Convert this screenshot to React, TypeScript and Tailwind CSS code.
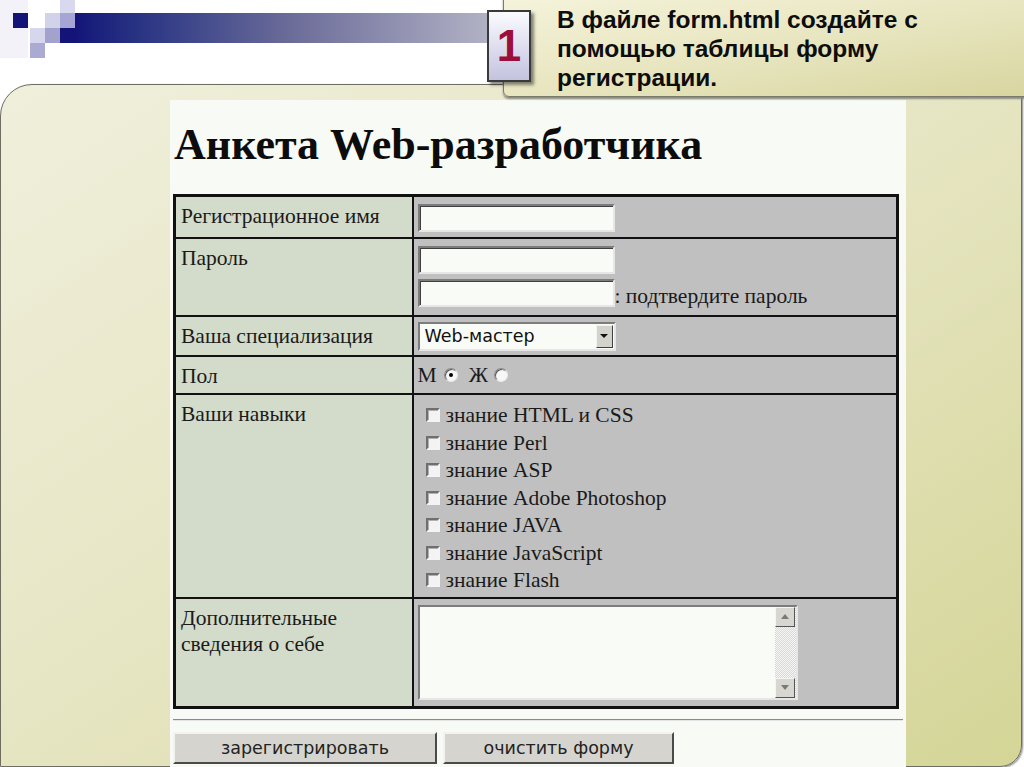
import React from "react";

const serif = "font-['Liberation_Serif','Times_New_Roman',serif]";
const sans = "font-['DejaVu_Sans','Verdana',sans-serif]";

const skills = [
  "знание HTML и CSS",
  "знание Perl",
  "знание ASP",
  "знание Adobe Photoshop",
  "знание JAVA",
  "знание JavaScript",
  "знание Flash",
];

const TextBox = ({ className = "" }: { className?: string }) => (
  <div
    className={
      "h-[28px] w-[197px] border-2 border-t-[#7c7c7c] border-l-[#7c7c7c] border-b-[#e6e6e6] border-r-[#e6e6e6] bg-[#f8fbf6] shadow-[inset_1px_1px_0_#3f3f3f] " +
      className
    }
  />
);

const Radio = ({ checked }: { checked?: boolean }) => (
  <span className="inline-flex h-[14px] w-[14px] items-center justify-center rounded-full border border-t-[#8a8a8a] border-l-[#8a8a8a] border-b-[#e8e8e8] border-r-[#e8e8e8] bg-[#f7f7f7] shadow-[inset_1px_1px_0_#555]">
    {checked && <span className="h-[4px] w-[4px] rounded-full bg-black" />}
  </span>
);

const Check = () => (
  <span className="inline-block h-[14px] w-[14px] border-2 border-t-[#6f6f6f] border-l-[#6f6f6f] border-b-[#f4f4f4] border-r-[#f4f4f4] bg-[#f3f3f3] shadow-[inset_1px_1px_0_#b0b0b0]" />
);

const ScrollBtn = ({ up }: { up?: boolean }) => (
  <div className="flex h-[20px] w-[20px] items-center justify-center border border-t-[#f4f4f4] border-l-[#f4f4f4] border-b-[#555] border-r-[#555] bg-[#d7d6d0]">
    <svg width="8" height="5" viewBox="0 0 8 5">
      <path d={up ? "M0 5 L4 0 L8 5 Z" : "M0 0 L4 5 L8 0 Z"} fill="#7a7a7a" />
    </svg>
  </div>
);

const Button = ({ children, w }: { children: string; w: string }) => (
  <div
    className={
      "flex h-[32px] items-center justify-center border-2 border-t-[#f2f2f0] border-l-[#f2f2f0] border-b-[#4a4a4a] border-r-[#4a4a4a] bg-[#d6d4cf] text-[17.5px] text-[#222] " +
      sans +
      " " +
      w
    }
  >
    {children}
  </div>
);

export default function App() {
  const label = "border-2 border-[#111] bg-[#d3dbca] pl-[5px] pt-[6px] align-top leading-[26px]";
  const field = "border-2 border-[#111] bg-[#c0c0c0] pl-[4px] align-top";

  return (
    <div className="relative h-[767px] w-[1024px] overflow-hidden bg-white">
      {/* header logo */}
      <div className="absolute left-0 top-0 h-[58px] w-[28px] bg-[#f2f2f8]" />
      <div className="absolute left-[13px] top-[13px] h-[15px] w-[15px] bg-[#141478]" />
      <div className="absolute left-[45px] top-[13px] h-[15px] w-[15px] bg-[#d2d2ea]" />
      <div className="absolute left-[60px] top-0 h-[13px] w-[15px] bg-[#d8d8ee]" />
      <div className="absolute left-[60px] top-[13px] h-[15px] w-[15px] bg-[#a6a6d4]" />
      <div className="absolute left-[30px] top-[28px] h-[15px] w-[15px] bg-[#d6d6ec]" />
      <div className="absolute left-[45px] top-[28px] h-[15px] w-[15px] bg-[#a2a2cc]" />
      <div className="absolute left-[30px] top-[43px] h-[15px] w-[15px] bg-[#aaaad2]" />
      <div className="absolute left-[60px] top-[28px] h-[15px] w-[15px] bg-[#141478]" />
      <div className="absolute left-[75px] top-[13px] h-[30px] w-[420px] bg-gradient-to-r from-[#141478] via-[#6a6a98] to-[#b4b4c6]" />

      {/* slide panel */}
      <div className="pt-[84px]">
        <div className="h-[683px] w-[1022px] rounded-tl-[32px] rounded-br-[22px] border border-[#6d6d60] bg-gradient-to-br from-[#f0efdc] via-[#e6e5c2] to-[#d4d596] pl-[169px] pt-[15px] shadow-[1px_1px_2px_#888]">
          <div className={"h-[700px] w-[736px] bg-[#f7faf5] " + serif}>
            <h1 className="pl-[4px] pt-[20px] text-[44px] font-bold leading-[50px] text-[#0c0c0c]">
              Анкета Web-разработчика
            </h1>

            <table className="ml-[3px] mt-[24px] w-[726px] border-collapse border-[3px] border-[#111] text-[21.5px] text-[#1a1a1a]">
              <tbody>
                <tr className="h-[42px]">
                  <td className={label + " w-[238px]"}>Регистрационное имя</td>
                  <td className={field + " pt-[7px]"}>
                    <TextBox />
                  </td>
                </tr>
                <tr className="h-[78px]">
                  <td className={label}>Пароль</td>
                  <td className={field + " pt-[7px]"}>
                    <TextBox />
                    <div className="mt-[5px] flex items-end">
                      <TextBox />
                      <span className="leading-[22px]">: подтвердите пароль</span>
                    </div>
                  </td>
                </tr>
                <tr className="h-[40px]">
                  <td className={label}>Ваша специализация</td>
                  <td className={field + " pt-[5px]"}>
                    <div className="flex h-[29px] w-[198px] items-center border-2 border-t-[#7c7c7c] border-l-[#7c7c7c] border-b-[#e6e6e6] border-r-[#e6e6e6] bg-[#f8fbf6]">
                      <span className={"flex-1 pl-[5px] text-[17.5px] text-[#111] " + sans}>Web-мастер</span>
                      <div className="mr-[1px] flex h-[23px] w-[17px] items-center justify-center border border-t-[#f2f2f2] border-l-[#f2f2f2] border-b-[#404040] border-r-[#404040] bg-[#d4d2cc]">
                        <svg width="8" height="4" viewBox="0 0 8 4">
                          <path d="M0 0 L8 0 L4 4 Z" fill="#111" />
                        </svg>
                      </div>
                    </div>
                  </td>
                </tr>
                <tr className="h-[38px]">
                  <td className={label}>Пол</td>
                  <td className={field + " pt-[6px]"}>
                    <div className="flex items-center leading-[24px]">
                      <span>М</span>
                      <span className="ml-[7px] mr-[11px] flex">
                        <Radio checked />
                      </span>
                      <span>Ж</span>
                      <span className="ml-[6px] flex">
                        <Radio />
                      </span>
                    </div>
                  </td>
                </tr>
                <tr className="h-[204px]">
                  <td className={label}>Ваши навыки</td>
                  <td className={field + " pl-[12px] pt-[7px]"}>
                    {skills.map((s) => (
                      <div key={s} className="flex h-[27.5px] items-center">
                        <Check />
                        <span className="ml-[6px] leading-[26px]">{s}</span>
                      </div>
                    ))}
                  </td>
                </tr>
                <tr className="h-[110px]">
                  <td className={label}>
                    Дополнительные
                    <br />
                    сведения о себе
                  </td>
                  <td className={field + " pt-[6px]"}>
                    <div className="flex h-[95px] w-[380px] border-2 border-t-[#7c7c7c] border-l-[#7c7c7c] border-b-[#e6e6e6] border-r-[#e6e6e6] bg-[#f8fbf6]">
                      <div className="flex-1" />
                      <div className="flex w-[21px] flex-col bg-[repeating-conic-gradient(#d9d8d2_0%_25%,#f6f6f4_0%_50%)] bg-[length:2px_2px]">
                        <ScrollBtn up />
                        <div className="flex-1" />
                        <ScrollBtn />
                      </div>
                    </div>
                  </td>
                </tr>
              </tbody>
            </table>

            <div className="ml-[3px] mt-[10px] h-[2px] w-[730px] border-t border-b border-t-[#8a8a8a] border-b-[#e4e4e4]" />

            <div className="ml-[3px] mt-[11px] flex gap-[6px]">
              <Button w="w-[264px]">зарегистрировать</Button>
              <Button w="w-[231px]">очистить форму</Button>
            </div>
          </div>
        </div>
      </div>

      {/* task title box */}
      <div className="absolute left-[503px] top-[-4px] h-[101px] w-[540px] rounded-bl-[6px] border border-[#7a7a6c] bg-gradient-to-br from-[#f5f3db] via-[#e8e6c0] to-[#d8d59f] shadow-[0_2px_2px_#8a8a80]">
        <div className="pl-[53px] pt-[8px] font-['Liberation_Sans',Arial,sans-serif] text-[24.5px] font-bold leading-[29px] text-[#0d0d0d]">
          В файле form.html создайте с
          <br />
          помощью таблицы форму
          <br />
          регистрации.
        </div>
      </div>
      <div className="absolute left-[487px] top-[10px] flex h-[72px] w-[44px] items-center justify-center border-2 border-[#3a3a3a] bg-gradient-to-b from-[#fbfbff] to-[#c3c3df] shadow-[3px_3px_3px_rgba(0,0,0,0.45)]">
        <span className="font-['Liberation_Sans',Arial,sans-serif] text-[44px] font-bold leading-none text-[#9b0f3c]">1</span>
      </div>
    </div>
  );
}
